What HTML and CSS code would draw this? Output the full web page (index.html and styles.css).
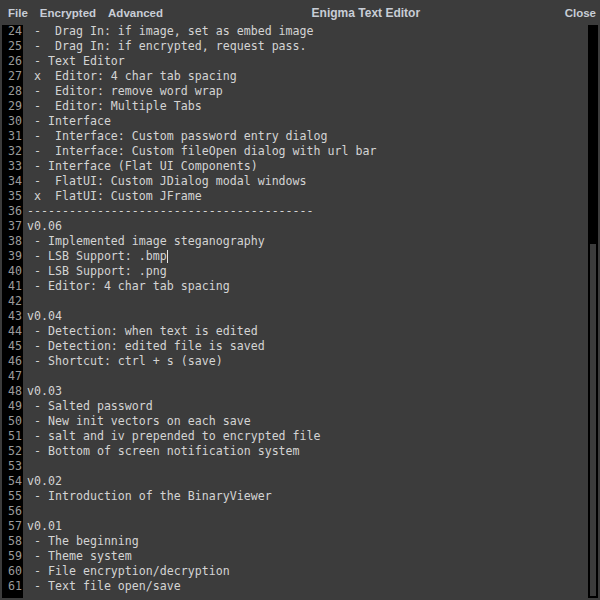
FILE: index.html
```html
<!DOCTYPE html>
<html>
<head>
<meta charset="utf-8">
<title>Enigma Text Editor</title>
<link rel="stylesheet" href="styles.css">
</head>
<body>
<div class="window">
  <div class="menubar">
    <div class="menus">
      <span class="menu">File</span>
      <span class="menu">Encrypted</span>
      <span class="menu">Advanced</span>
    </div>
    <div class="title">Enigma Text Editor</div>
    <span class="menu close">Close</span>
  </div>
  <div class="editor">
    <div class="gutter"><div class="lines">24
25
26
27
28
29
30
31
32
33
34
35
36
37
38
39
40
41
42
43
44
45
46
47
48
49
50
51
52
53
54
55
56
57
58
59
60
61</div></div>
    <div class="code"><div class="lines"> -  Drag In: if image, set as embed image
 -  Drag In: if encrypted, request pass.
 - Text Editor
 x  Editor: 4 char tab spacing
 -  Editor: remove word wrap
 -  Editor: Multiple Tabs
 - Interface
 -  Interface: Custom password entry dialog
 -  Interface: Custom fileOpen dialog with url bar
 - Interface (Flat UI Components)
 -  FlatUI: Custom JDialog modal windows
 x  FlatUI: Custom JFrame
-----------------------------------------
v0.06
 - Implemented image steganography
 - LSB Support: .bmp<span class="caret"></span>
 - LSB Support: .png
 - Editor: 4 char tab spacing

v0.04
 - Detection: when text is edited
 - Detection: edited file is saved
 - Shortcut: ctrl + s (save)

v0.03
 - Salted password
 - New init vectors on each save
 - salt and iv prepended to encrypted file
 - Bottom of screen notification system

v0.02
 - Introduction of the BinaryViewer

v0.01
 - The beginning
 - Theme system
 - File encryption/decryption
 - Text file open/save</div></div>
    <div class="scrollbar"><div class="thumb"></div></div>
  </div>
</div>
</body>
</html>
```

FILE: styles.css
```css
html, body {
  margin: 0;
  padding: 0;
  background: #3c3c3c;
}
.window {
  width: 600px;
  height: 600px;
  overflow: hidden;
  display: flex;
  flex-direction: column;
}
.menubar {
  height: 25px;
  display: flex;
  align-items: center;
  padding: 0 4px 0 8px;
  font-family: "Liberation Sans", Arial, sans-serif;
  font-weight: bold;
  font-size: 11.5px;
  color: #c8cdd6;
}
.menus {
  display: flex;
  gap: 12px;
}
.title {
  flex: 1;
  text-align: center;
  font-size: 12px;
  padding-left: 4px;
}
.editor {
  height: 573px;
  margin: 0 2px;
  display: flex;
  overflow: hidden;
}
.gutter {
  width: 20px;
  padding-right: 1px;
  background: #000;
  text-align: right;
  color: #9a9a9a;
}
.code {
  flex: 1;
  padding-left: 4px;
  color: #d4d4d4;
}
.lines {
  margin-top: -1px;
  white-space: pre;
  font-family: "DejaVu Sans Mono", monospace;
  font-size: 11.62px;
  line-height: 15px;
}
.caret {
  display: inline-block;
  width: 1px;
  height: 13px;
  background: #e6e6e6;
  vertical-align: -3px;
}
.scrollbar {
  width: 10px;
  background: #000;
  display: flex;
  flex-direction: column;
  justify-content: flex-end;
  padding-bottom: 2px;
  box-sizing: border-box;
}
.thumb {
  height: 352px;
  margin: 0 2px;
  background: #3c3c3c;
}
```
